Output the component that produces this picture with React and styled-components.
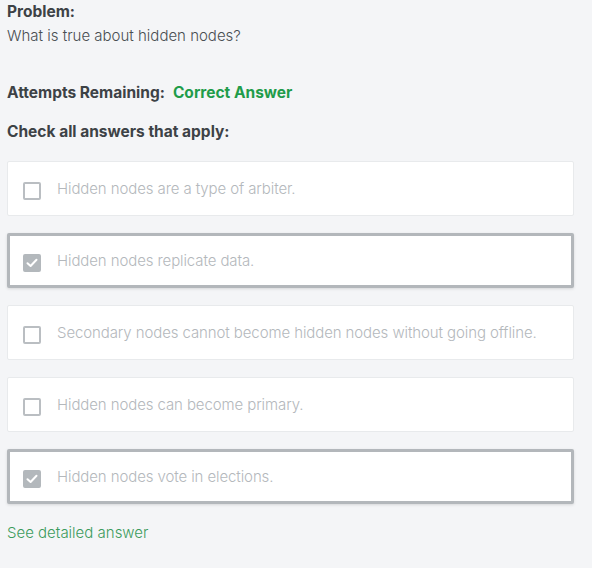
import React from "react";
import styled, { createGlobalStyle } from "styled-components";

const Global = createGlobalStyle`
  html, body { margin: 0; padding: 0; background: #f4f5f7; }
  body { font-family: Inter, Roboto, "Liberation Sans", sans-serif; }
`;

const Page = styled.div`
  padding: 0 18px 0 7px;
  min-height: 568px;
  box-sizing: border-box;
  background: #f4f5f7;
`;

const Label = styled.div`
  font-size: 15.5px;
  font-weight: 700;
  color: #3d4246;
  line-height: 24px;
  display: flex;
  gap: 8px;
  white-space: nowrap;
`;

const Question = styled.div`
  font-size: 15px;
  font-weight: 300;
  color: #494e52;
  line-height: 24px;
`;

const Status = styled.span`
  color: #1f9c4a;
`;

const Section = styled.div`
  margin-top: ${(p) => p.$mt}px;
`;

const List = styled.div`
  display: flex;
  flex-direction: column;
  gap: 17px;
  margin-top: 17px;
`;

const Card = styled.div`
  height: 55px;
  box-sizing: border-box;
  background: #fff;
  border: ${(p) => (p.$checked ? "3px solid #b3b7bb" : "1px solid #e8eaec")};
  border-radius: 2px;
  box-shadow: ${(p) => (p.$checked ? "0 1px 3px rgba(0,0,0,0.12)" : "none")};
  display: flex;
  align-items: center;
  padding: ${(p) => (p.$checked ? "5px 0 0 13px" : "5px 0 0 15px")};
  gap: 16px;
`;

const Box = styled.span`
  width: 18px;
  height: 18px;
  box-sizing: border-box;
  border-radius: 2px;
  border: 2px solid;
  background: ${(p) => (p.$checked ? "#b3b8bc" : "#fff")};
  border-color: ${(p) => (p.$checked ? "#b3b8bc" : "#babec2")};
  display: flex;
  align-items: center;
  justify-content: center;
  flex-shrink: 0;
`;

const OptionText = styled.span`
  font-size: 15px;
  font-weight: 300;
  color: #b4b8bc;
  line-height: 20px;
  margin-top: -4px;
  letter-spacing: -0.1px;
`;

const Link = styled.a`
  display: block;
  margin-top: 17px;
  font-size: 15px;
  font-weight: 300;
  color: #3b9b5c;
  line-height: 24px;
  text-decoration: none;
`;

const options = [
  { text: "Hidden nodes are a type of arbiter.", checked: false },
  { text: "Hidden nodes replicate data.", checked: true },
  { text: "Secondary nodes cannot become hidden nodes without going offline.", checked: false },
  { text: "Hidden nodes can become primary.", checked: false },
  { text: "Hidden nodes vote in elections.", checked: true },
];

function Check() {
  return (
    <svg width="12" height="10" viewBox="0 0 12 10">
      <path d="M1.5 5.2 L4.6 8 L10.5 1.8" fill="none" stroke="#fff" strokeWidth="2" strokeLinecap="round" strokeLinejoin="round" />
    </svg>
  );
}

export default function App() {
  return (
    <>
      <Global />
      <Page>
        <Label>Problem:</Label>
        <Question>What is true about hidden nodes?</Question>
        <Section $mt={33}>
          <Label>
            Attempts Remaining: <Status>Correct Answer</Status>
          </Label>
        </Section>
        <Section $mt={15}>
          <Label>Check all answers that apply:</Label>
        </Section>
        <List>
          {options.map((o) => (
            <Card key={o.text} $checked={o.checked}>
              <Box $checked={o.checked}>{o.checked && <Check />}</Box>
              <OptionText>{o.text}</OptionText>
            </Card>
          ))}
        </List>
        <Link href="#">See detailed answer</Link>
      </Page>
    </>
  );
}
